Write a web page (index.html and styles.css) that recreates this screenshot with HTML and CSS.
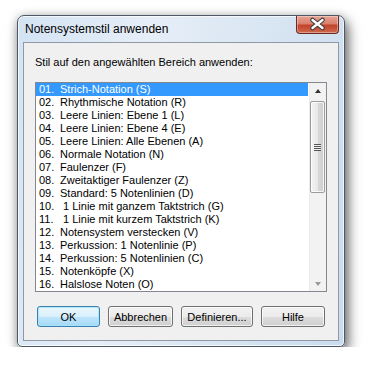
FILE: index.html
```html
<!DOCTYPE html>
<html lang="de">
<head>
    <meta charset="UTF-8">
    <title>Notensystemstil anwenden</title>
    <link rel="stylesheet" href="styles.css">
</head>
<body>
    <!-- Dialog window -->
    <div class="dialog">
        <div class="titlebar">
            <span class="title">Notensystemstil anwenden</span>
            <button class="close" aria-label="Schließen">
                <svg width="43" height="18" viewBox="0 0 43 18">
                    <path d="M16.5 5 L26.5 13 M26.5 5 L16.5 13" stroke="#3b3b3b" stroke-width="4.6" stroke-linecap="round"/>
                    <path d="M16.5 5 L26.5 13 M26.5 5 L16.5 13" stroke="#ffffff" stroke-width="2.4" stroke-linecap="round"/>
                </svg>
            </button>
        </div>

        <div class="client">
            <p class="prompt">Stil auf den angewählten Bereich anwenden:</p>

            <!-- List of styles -->
            <div class="listbox">
                <ul class="items">
                    <li class="selected"><span class="num">01.</span>Strich-Notation (S)</li>
                    <li><span class="num">02.</span>Rhythmische Notation (R)</li>
                    <li><span class="num">03.</span>Leere Linien: Ebene 1 (L)</li>
                    <li><span class="num">04.</span>Leere Linien: Ebene 4 (E)</li>
                    <li><span class="num">05.</span>Leere Linien: Alle Ebenen (A)</li>
                    <li><span class="num">06.</span>Normale Notation (N)</li>
                    <li><span class="num">07.</span>Faulenzer (F)</li>
                    <li><span class="num">08.</span>Zweitaktiger Faulenzer (Z)</li>
                    <li><span class="num">09.</span>Standard: 5 Notenlinien (D)</li>
                    <li><span class="num">10.</span> 1 Linie mit ganzem Taktstrich (G)</li>
                    <li><span class="num">11.</span> 1 Linie mit kurzem Taktstrich (K)</li>
                    <li><span class="num">12.</span>Notensystem verstecken (V)</li>
                    <li><span class="num">13.</span>Perkussion: 1 Notenlinie (P)</li>
                    <li><span class="num">14.</span>Perkussion: 5 Notenlinien (C)</li>
                    <li><span class="num">15.</span>Notenköpfe (X)</li>
                    <li><span class="num">16.</span>Halslose Noten (O)</li>
                </ul>
                <div class="scrollbar">
                    <div class="arrow up"></div>
                    <div class="track">
                        <div class="thumb"><span class="grip"></span></div>
                    </div>
                    <div class="arrow down"></div>
                </div>
            </div>

            <!-- Buttons -->
            <div class="buttons">
                <button class="btn default w-ok">OK</button>
                <button class="btn w-cancel">Abbrechen</button>
                <button class="btn w-define">Definieren...</button>
                <button class="btn w-help">Hilfe</button>
            </div>
        </div>
    </div>
</body>
</html>
```

FILE: styles.css
```css
/* General */
* {
    box-sizing: border-box;
}
body {
    margin: 0;
    padding: 15px 0 0 17px;
    background: #ffffff;
    font-family: 'Liberation Sans', Arial, sans-serif;
    font-size: 11px;
    color: #000;
}

/* Window frame */
.dialog {
    display: flex;
    flex-direction: column;
    width: 328px;
    height: 332px;
    padding: 0 5px 5px 5px;
    border: 1px solid #4d5966;
    border-radius: 7px 7px 5px 5px;
    background: linear-gradient(100deg, #d3e3f3 0%, #e6eef8 35%, #dbe7f3 60%, #c9dcef 100%);
    box-shadow: inset 0 0 0 1px rgba(255,255,255,.7), 3px 6px 13px rgba(0,0,0,.6), 0 0 8px rgba(0,0,0,.15);
}
.titlebar {
    display: flex;
    justify-content: space-between;
    align-items: flex-start;
    height: 26px;
}
.title {
    padding-left: 2px;
    font-size: 12px;
    line-height: 26px;
    color: #000;
}
.close {
    width: 43px;
    height: 18px;
    padding: 0;
    border: 1px solid #6b2b22;
    border-top: none;
    border-radius: 0 0 4px 4px;
    background: linear-gradient(#e7a394 0%, #d9806d 45%, #c4432b 55%, #cf6a4f 100%);
    box-shadow: inset 0 0 0 1px rgba(255,255,255,.35);
}
.close svg {
    display: block;
    margin: -1px 0 0 -1px;
}

/* Client area */
.client {
    flex: 1;
    padding: 11px 11px 0 11px;
    border: 1px solid #8f9aa6;
    background: #f0f0f0;
}
.prompt {
    margin: 0 0 12px 0;
    line-height: 16px;
}

/* List box */
.listbox {
    display: flex;
    height: 210px;
    border: 1px solid #828790;
    background: #fff;
}
.items {
    flex: 1;
    margin: 0;
    padding: 0 1px 0 0;
    list-style: none;
}
.items li {
    height: 13px;
    padding-left: 3px;
    line-height: 13px;
    white-space: pre;
}
.items li.selected {
    background: #3399ff;
    color: #fff;
}
.num {
    display: inline-block;
    width: 21px;
}

/* Scrollbar */
.scrollbar {
    display: flex;
    flex-direction: column;
    width: 17px;
    background: #f2f2f2;
    border-left: 1px solid #ececec;
}
.arrow {
    position: relative;
    height: 17px;
}
.arrow::after {
    content: '';
    position: absolute;
    left: 5px;
    width: 0;
    height: 0;
    border-left: 3.5px solid transparent;
    border-right: 3.5px solid transparent;
}
.arrow.up::after {
    top: 6px;
    border-bottom: 4px solid #333;
}
.arrow.down::after {
    top: 8px;
    border-top: 4px solid #999;
}
.track {
    flex: 1;
    padding-top: 1px;
}
.thumb {
    display: flex;
    align-items: center;
    justify-content: center;
    width: 15px;
    height: 92px;
    border: 1px solid #9c9c9c;
    border-radius: 2px;
    background: linear-gradient(90deg, #f4f4f4 0%, #e8e8e8 50%, #d8d8d8 51%, #cfcfcf 100%);
    box-shadow: inset 0 0 0 1px rgba(255,255,255,.8);
}
.grip {
    width: 7px;
    height: 7px;
    background: repeating-linear-gradient(#555 0 1px, #f0f0f0 1px 2px);
}

/* Buttons */
.buttons {
    display: flex;
    gap: 8px;
    margin: 14px 0 0 2px;
}
.btn {
    height: 21px;
    padding: 0;
    border: 1px solid #707070;
    border-radius: 3px;
    background: linear-gradient(#f2f2f2 0%, #ebebeb 50%, #dddddd 51%, #cfcfcf 100%);
    box-shadow: inset 0 0 0 1px rgba(255,255,255,.7);
    font-family: inherit;
    font-size: 11px;
    color: #000;
}
.btn.default {
    border-color: #3c7fb1;
    background: linear-gradient(#eaf6fd 0%, #d9f0fc 50%, #bee6fd 51%, #a7d9f5 100%);
    box-shadow: inset 0 0 0 1px rgba(160,230,255,.8);
}
.w-ok { width: 63px; }
.w-cancel { width: 65px; }
.w-define { width: 72px; }
.w-help { width: 64px; }
```
